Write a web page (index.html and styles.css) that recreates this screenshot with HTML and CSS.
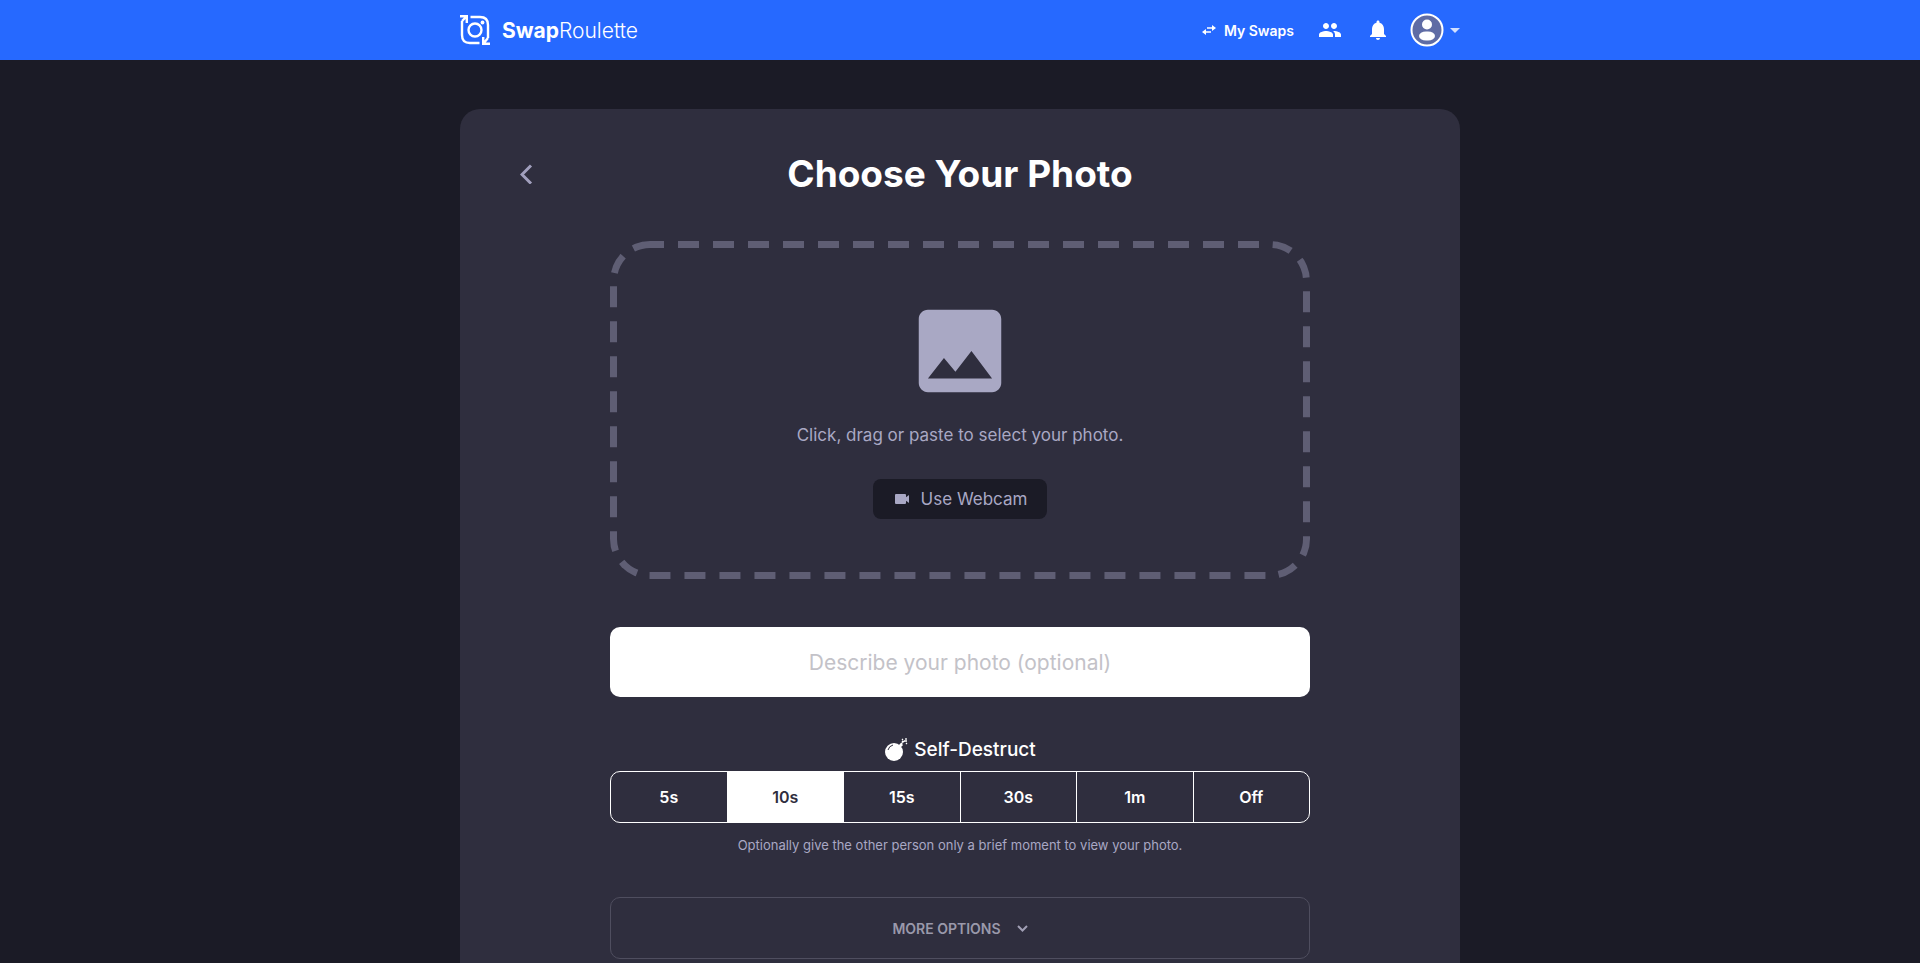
FILE: index.html
```html
<!DOCTYPE html>
<html lang="en">
<head>
<meta charset="utf-8">
<meta name="viewport" content="width=device-width, initial-scale=1">
<title>SwapRoulette</title>
<link rel="stylesheet" href="styles.css">
</head>
<body>

<header class="navbar">
  <div class="navbar-inner">
    <a class="brand" href="#">
      <svg class="brand-icon" viewBox="0 0 30 30" fill="none" stroke="#fff" stroke-width="2.400">
        <path d="M10.500 2H20q8 0 8 8v13"/>
        <path d="M19.500 28H10q-8 0-8-8V6"/>
        <circle cx="15" cy="15" r="6.500"/>
        <circle cx="22.500" cy="7.500" r="1.900" fill="#fff" stroke="none"/>
        <path d="M0 1.200h6.800v6.800M7 1L2 6M30 28.800h-6.800v-6.800M23 29l5-6"/>
      </svg>
      <span class="brand-name"><b>Swap</b>Roulette</span>
    </a>
    <nav class="nav">
      <a class="nav-swaps" href="#">
        <svg width="14" height="10" viewBox="0 0 14 10" fill="#fff">
          <path d="M10 0l4 3-4 3V3.700H5V2.300h5zM4 4l-4 3 4 3V7.700h5V6.300H4z"/>
        </svg>
        My Swaps
      </a>
      <a class="nav-icon" href="#" aria-label="Friends">
        <svg width="24" height="24" viewBox="0 0 24 24" fill="#fff">
          <path d="M16 11c1.660 0 2.990-1.340 2.990-3S17.660 5 16 5s-3 1.340-3 3 1.340 3 3 3zm-8 0c1.660 0 2.990-1.340 2.990-3S9.660 5 8 5 5 6.340 5 8s1.340 3 3 3zm0 2c-2.330 0-7 1.170-7 3.500V19h14v-2.500c0-2.330-4.670-3.500-7-3.500zm8 0c-.29 0-.62.020-.97.050 1.160.84 1.970 1.970 1.970 3.450V19h6v-2.500c0-2.330-4.670-3.500-7-3.500z"/>
        </svg>
      </a>
      <a class="nav-icon" href="#" aria-label="Notifications">
        <svg width="24" height="24" viewBox="0 0 24 24" fill="#fff">
          <path d="M12 22c1.100 0 2-.9 2-2h-4c0 1.100.89 2 2 2zm6-6v-5c0-3.070-1.640-5.640-4.500-6.320V4c0-.83-.67-1.500-1.500-1.500s-1.500.67-1.500 1.500v.68C7.630 5.360 6 7.920 6 11v5l-2 2v1h16v-1l-2-2z"/>
        </svg>
      </a>
      <button class="nav-user" type="button" aria-label="Account">
        <svg width="34" height="34" viewBox="0 0 34 34">
          <circle cx="17" cy="17" r="15.500" fill="#5f6ca5" stroke="#fff" stroke-width="2"/>
          <circle cx="17" cy="11.500" r="5" fill="#fff"/>
          <rect x="9" y="18.500" width="16" height="9" rx="7" ry="4.500" fill="#fff"/>
        </svg>
        <svg width="10" height="5" viewBox="0 0 10 5" fill="#d3e0ff"><path d="M0 0h10L5 5z"/></svg>
      </button>
    </nav>
  </div>
</header>

<main class="card">
  <div class="card-head">
    <a class="back" href="#" aria-label="Back">
      <svg width="13" height="20" viewBox="0 0 13 20" fill="none" stroke="#a19fbd" stroke-width="3"><path d="M11 1.500L2 10.500l9 9"/></svg>
    </a>
    <h1>Choose Your Photo</h1>
  </div>

  <form class="upload">
    <div class="dropzone">
      <svg class="dropzone-border"><rect width="100%" height="100%" rx="40" ry="40" fill="none" stroke="#5f5e74" stroke-width="14" stroke-dasharray="21 14" stroke-dashoffset="7"/></svg>
      <input class="hidden" type="file" id="photo" accept="image/*">
      <label class="dropzone-label" for="photo">
        <svg width="110" height="110" viewBox="0 0 24 24" fill="#a9a8c4">
          <path d="M21 19V5c0-1.100-.9-2-2-2H5c-1.100 0-2 .9-2 2v14c0 1.100.9 2 2 2h14c1.100 0 2-.9 2-2zM8.500 13.500l2.500 3.010L14.500 12l4.500 6H5l3.500-4.500z"/>
        </svg>
        <span>Click, drag or paste to select your photo.</span>
      </label>
      <button class="webcam" type="button">
        <svg width="14" height="10" viewBox="0 0 14 10" fill="#a9a8c4">
          <rect width="11" height="10" rx="1"/><path d="M10 4l4-3v8l-4-3z"/>
        </svg>
        Use Webcam
      </button>
    </div>

    <label class="hidden" for="description">Description</label>
    <input class="description" type="text" id="description" placeholder="Describe your photo (optional)">

    <fieldset class="destruct">
      <legend>
        <svg width="24" height="24" viewBox="0 0 24 24" fill="none" stroke="#fff">
          <circle cx="10" cy="14" r="9" fill="#fff" stroke="none"/>
          <path d="M4 12q1-4 5-5" stroke="#2f2e3e"/>
          <path d="M14 10l4-4" stroke-width="3"/>
          <path d="M17 6l3-3M18 1l1 1M22 0v2M20 3h3M22 5l1 1M18 3l1 1" stroke-width="1.300"/>
        </svg>
        Self-Destruct
      </legend>
      <div class="timer">
        <input class="hidden" type="radio" name="timer" id="t5"><label for="t5">5s</label>
        <input class="hidden" type="radio" name="timer" id="t10" checked><label for="t10">10s</label>
        <input class="hidden" type="radio" name="timer" id="t15"><label for="t15">15s</label>
        <input class="hidden" type="radio" name="timer" id="t30"><label for="t30">30s</label>
        <input class="hidden" type="radio" name="timer" id="t60"><label for="t60">1m</label>
        <input class="hidden" type="radio" name="timer" id="toff"><label for="toff">Off</label>
      </div>
      <p class="hint">Optionally give the other person only a brief moment to view your photo.</p>
    </fieldset>

    <button class="more" type="button">
      MORE OPTIONS
      <svg width="11" height="7" viewBox="0 0 11 7" fill="none" stroke="#a19fb5" stroke-width="2"><path d="M1 1l4.500 4.500L10 1"/></svg>
    </button>
  </form>
</main>

</body>
</html>
```
FILE: styles.css
```css
* {
    box-sizing: border-box;
}

body {
    margin: 0;
    background: #1b1b26;
    color: #fff;
    font-family: Inter, "Open Sans", sans-serif;
    font-size: 17px;
}

a {
    color: inherit;
    text-decoration: none;
}

button, input {
    font-family: inherit;
}

button {
    cursor: pointer;
}

svg {
    display: block;
    flex: none;
}

.hidden {
    position: absolute;
    width: 1px;
    height: 1px;
    margin: 0;
    opacity: 0;
    overflow: hidden;
}

/* top bar */
.navbar {
    background: #2669ff;
}

.navbar-inner {
    display: flex;
    align-items: center;
    justify-content: space-between;
    max-width: 1000px;
    height: 60px;
    margin: 0 auto;
}

.brand {
    display: flex;
    align-items: center;
    gap: 12px;
    font-size: 21px;
    font-weight: 300;
}

.brand b {
    font-weight: 700;
}

.brand-icon {
    width: 30px;
    height: 30px;
}

.nav {
    display: flex;
    align-items: center;
    gap: 24px;
}

.nav-swaps {
    display: flex;
    align-items: center;
    gap: 8px;
    font-size: 14px;
    font-weight: 600;
}

.nav-user {
    display: flex;
    align-items: center;
    gap: 6px;
    margin-left: -4px;
    padding: 0;
    border: 0;
    background: none;
}

/* main card */
.card {
    max-width: 1000px;
    margin: 49px auto 0;
    padding: 40px 60px 60px;
    background: #2f2e3e;
    border-radius: 20px;
}

.card-head {
    display: grid;
    grid-template-columns: 13px 1fr 13px;
    align-items: center;
    margin-bottom: 42px;
}

.card-head h1 {
    margin: 0;
    font-size: 37px;
    line-height: 50px;
    font-weight: 700;
    text-align: center;
}

.upload {
    max-width: 700px;
    margin: 0 auto;
}

.dropzone {
    position: relative;
    display: flex;
    flex-direction: column;
    align-items: center;
    padding: 55px 20px 60px;
    color: #a9a8c4;
}

.dropzone-border {
    position: absolute;
    inset: 0;
    width: 100%;
    height: 100%;
    border-radius: 40px;
    overflow: hidden;
    pointer-events: none;
}

.dropzone-label {
    display: flex;
    flex-direction: column;
    align-items: center;
    gap: 17px;
    line-height: 24px;
    cursor: pointer;
}

.webcam {
    display: flex;
    align-items: center;
    gap: 12px;
    height: 40px;
    margin-top: 32px;
    padding: 0 20px 0 22px;
    border: 0;
    border-radius: 8px;
    background: #1b1b26;
    color: inherit;
    font-size: 17px;
}

.description {
    display: block;
    width: 100%;
    height: 70px;
    margin-top: 48px;
    border: 0;
    border-radius: 10px;
    background: #fff;
    color: #2f2e3e;
    font-size: 21px;
    text-align: center;
}

.description::placeholder {
    color: #c3c2c8;
}

.destruct {
    margin: 40px 0 0;
    padding: 0;
    border: 0;
}

.destruct legend {
    display: flex;
    align-items: center;
    justify-content: center;
    gap: 6px;
    width: 100%;
    padding: 0;
    font-size: 19px;
    line-height: 26px;
    font-weight: 500;
}

.timer {
    display: flex;
    height: 52px;
    margin-top: 8px;
    border: 1px solid #fff;
    border-radius: 10px;
    overflow: hidden;
}

.timer label {
    display: flex;
    flex: 1;
    align-items: center;
    justify-content: center;
    border-left: 1px solid #fff;
    font-size: 16px;
    font-weight: 600;
    cursor: pointer;
}

.timer label:first-of-type {
    border-left: 0;
}

.timer input:checked + label {
    background: #fff;
    color: #2f2e3e;
}

.hint {
    margin: 12px 0 0;
    color: #a9a8c4;
    font-size: 13px;
    line-height: 20px;
    text-align: center;
}

.more {
    display: flex;
    align-items: center;
    justify-content: center;
    gap: 16px;
    width: 100%;
    height: 62px;
    margin-top: 42px;
    border: 1px solid #4f4e5f;
    border-radius: 10px;
    background: none;
    color: #9a99ab;
    font-size: 14px;
    font-weight: 600;
}
```
